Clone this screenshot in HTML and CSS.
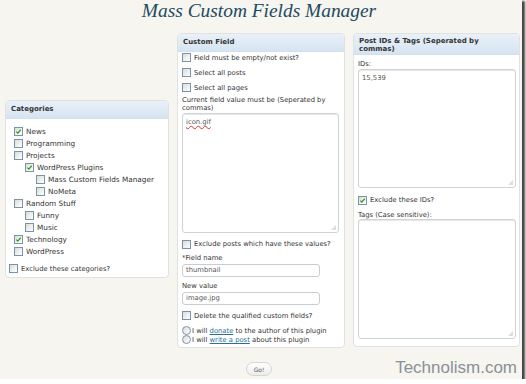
FILE: index.html
```html
<!DOCTYPE html>
<html lang="en">
<head>
    <meta charset="UTF-8">
    <title>Mass Custom Fields Manager</title>
    <link rel="stylesheet" href="styles.css">
</head>
<body>
<div class="screen">
    <h1 class="title">Mass Custom Fields Manager</h1>

    <div class="columns">
        <div class="box cats">
            <div class="box-head">Categories</div>
            <div class="box-body">
                <ul class="tree">
                    <li><span class="cb on"><svg viewBox="0 0 8 8"><path d="M1.5 4.2 L3.2 5.8 L6.5 2"/></svg></span>News</li>
                    <li><span class="cb"></span>Programming</li>
                    <li><span class="cb"></span>Projects
                        <ul>
                            <li><span class="cb on"><svg viewBox="0 0 8 8"><path d="M1.5 4.2 L3.2 5.8 L6.5 2"/></svg></span>WordPress Plugins
                                <ul>
                                    <li><span class="cb"></span>Mass Custom Fields Manager</li>
                                    <li><span class="cb"></span>NoMeta</li>
                                </ul>
                            </li>
                        </ul>
                    </li>
                    <li><span class="cb"></span>Random Stuff
                        <ul>
                            <li><span class="cb"></span>Funny</li>
                            <li><span class="cb"></span>Music</li>
                        </ul>
                    </li>
                    <li><span class="cb on"><svg viewBox="0 0 8 8"><path d="M1.5 4.2 L3.2 5.8 L6.5 2"/></svg></span>Technology</li>
                    <li><span class="cb"></span>WordPress</li>
                </ul>
                <div class="opt exclude-cats"><span class="cb"></span>Exclude these categories?</div>
            </div>
        </div>

        <div class="box custom">
            <div class="box-head">Custom Field</div>
            <div class="box-body">
                <div class="opt first"><span class="cb"></span>Field must be empty/not exist?</div>
                <div class="opt"><span class="cb"></span>Select all posts</div>
                <div class="opt"><span class="cb"></span>Select all pages</div>
                <div class="label two">Current field value must be (Seperated by commas)</div>
                <div class="area tall-a"><span class="squiggle">icon.gif</span><span class="grip"></span></div>
                <div class="opt after-area"><span class="cb"></span>Exclude posts which have these values?</div>
                <div class="label">*Field name</div>
                <div class="field">thumbnail</div>
                <div class="label">New value</div>
                <div class="field">image.jpg</div>
                <div class="opt after-field"><span class="cb"></span>Delete the qualified custom fields?</div>
                <div class="radios">
                    <div class="radio-row"><span class="rd"></span>I will <a href="#">donate</a> to the author of this plugin</div>
                    <div class="radio-row"><span class="rd"></span>I will <a href="#">write a post</a> about this plugin</div>
                </div>
            </div>
        </div>

        <div class="box ids">
            <div class="box-head two">Post IDs &amp; Tags (Seperated by commas)</div>
            <div class="box-body">
                <div class="label first">IDs:</div>
                <div class="area ids-a">15,539<span class="grip"></span></div>
                <div class="opt"><span class="cb on"><svg viewBox="0 0 8 8"><path d="M1.5 4.2 L3.2 5.8 L6.5 2"/></svg></span>Exclude these IDs?</div>
                <div class="label">Tags (Case sensitive):</div>
                <div class="area tags-a"><span class="grip"></span></div>
            </div>
        </div>
    </div>

    <div class="actions">
        <button class="go">Go!</button>
    </div>

    <div class="watermark">Technolism.com</div>
</div>
</body>
</html>
```

FILE: styles.css
```css
html {
    background: #ffffff;
}

body {
    margin: 0;
    font-family: "DejaVu Sans", Verdana, sans-serif;
    font-size: 6.8px;
    color: #333333;
}

.screen {
    position: relative;
    width: 522px;
    height: 379px;
    background: #f6f5f0;
    box-shadow: 2px 2px 2px 1px #444444;
    overflow: hidden;
}

.title {
    margin: 0;
    text-align: center;
    font-family: "Liberation Serif", "Times New Roman", serif;
    font-style: italic;
    font-weight: normal;
    font-size: 19.4px;
    line-height: 22px;
    color: #1d4a60;
    padding-right: 4px;
}

.columns {
    display: flex;
    align-items: flex-start;
    gap: 8px;
    padding-left: 5px;
    margin-top: 11px;
}

.box {
    background: #ffffff;
    border: 1px solid #e1e1e1;
    border-radius: 4px;
    overflow: hidden;
}

.box-head {
    height: 17px;
    line-height: 17px;
    padding-left: 5px;
    font-weight: bold;
    font-size: 7px;
    color: #333333;
    background: linear-gradient(#e9f1f9, #d6e4f1);
    border-bottom: 1px solid #d3e0ec;
}

.box-head.two {
    height: 21px;
    line-height: 8px;
    padding-top: 3px;
    padding-right: 8px;
    box-sizing: border-box;
}

/* categories */
.cats {
    width: 164px;
    height: 178px;
    margin-top: 67px;
    box-sizing: border-box;
}

.tree,
.tree ul {
    list-style: none;
    margin: 0;
    padding: 0;
}

.tree {
    padding: 7px 0 0 8px;
}

.tree ul {
    padding-left: 11px;
}

.tree li {
    line-height: 12px;
    font-size: 7.3px;
}

.exclude-cats {
    margin-left: 3px;
    margin-top: 6px;
}

/* checkboxes and radios */
.cb {
    display: inline-block;
    flex: none;
    width: 7px;
    height: 7px;
    border: 1px solid #7a93ad;
    background: linear-gradient(135deg, #dcdcd6, #ffffff);
    vertical-align: -2px;
    margin-right: 3px;
    position: relative;
}

.cb svg {
    position: absolute;
    left: 0;
    top: 0;
    width: 7px;
    height: 7px;
    fill: none;
    stroke: #21a121;
    stroke-width: 1.4;
}

.rd {
    display: inline-block;
    width: 7px;
    height: 7px;
    border: 1px solid #7a93ad;
    border-radius: 50%;
    background: linear-gradient(135deg, #dcdcd6, #ffffff);
    vertical-align: -2px;
    margin-right: 1px;
}

.opt {
    display: flex;
    align-items: center;
    height: 9px;
    margin-top: 6px;
}

.label {
    line-height: 8px;
    margin-top: 5px;
}

/* custom field */
.custom {
    width: 166px;
}

.custom .box-body {
    padding: 0 5px 3px 4px;
}

.custom .opt.first {
    margin-top: 1px;
}

.label.two {
    line-height: 7.5px;
    margin-top: 5px;
}

.area {
    position: relative;
    margin-top: 1px;
    border: 1px solid #cfd3d6;
    border-radius: 3px;
    background: #ffffff;
    padding: 4px 3px;
    color: #555555;
    box-sizing: border-box;
    box-shadow: inset 0 1px 1px #e6e6e6;
}

.grip {
    position: absolute;
    right: 2px;
    bottom: 2px;
    width: 5px;
    height: 5px;
    background: radial-gradient(circle, #b5b5b5 0.6px, transparent 0.8px) 0 0 / 2px 2px;
    clip-path: polygon(100% 0, 100% 100%, 0 100%);
}

.tall-a {
    height: 120px;
}

.custom .after-area,
.custom .after-field {
    margin-top: 6.5px;
}

.squiggle {
    text-decoration: underline wavy #e03030;
    text-decoration-thickness: 0.5px;
    text-underline-offset: 1px;
}

.field {
    width: 138px;
    height: 13px;
    line-height: 11px;
    margin-top: 2px;
    padding-left: 3px;
    border: 1px solid #c9cdd1;
    border-radius: 3px;
    background: #ffffff;
    color: #555555;
    box-sizing: border-box;
}

.radios {
    margin-top: 6px;
}

.radio-row {
    line-height: 9px;
    height: 9px;
}

.radio-row a {
    color: #2a6f97;
}

/* post ids */
.ids {
    width: 165px;
}

.ids .box-body {
    padding: 0 3px 7px 4px;
}

.ids .label.first {
    margin-top: 5px;
}

.ids-a {
    height: 119px;
}

.ids .opt {
    margin-top: 7.5px;
}

.ids .label {
    margin-top: 6.5px;
}

.tags-a {
    height: 120px;
    margin-top: 0;
}

/* bottom */
.actions {
    display: flex;
    justify-content: center;
    margin-top: 14px;
}

.go {
    width: 26px;
    height: 14px;
    padding: 0;
    border: 1px solid #d5d5d5;
    border-radius: 7px;
    background: linear-gradient(#ffffff, #ececec);
    font-family: "DejaVu Sans", Verdana, sans-serif;
    font-size: 6px;
    color: #555555;
    margin-right: 4px;
}

.watermark {
    position: absolute;
    right: 5px;
    bottom: 1px;
    font-family: "Liberation Sans", Arial, sans-serif;
    font-size: 17px;
    color: #8b9098;
}
```
